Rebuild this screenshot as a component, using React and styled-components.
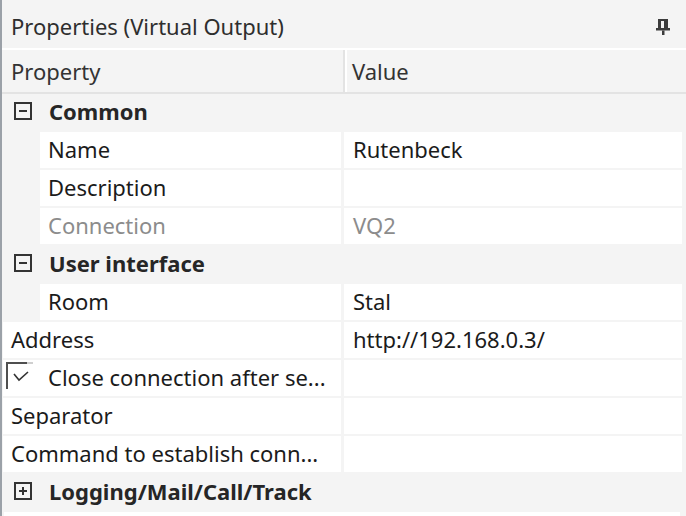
import React from 'react';
import styled, { createGlobalStyle } from 'styled-components';

const GlobalStyle = createGlobalStyle`
  html, body {
    margin: 0;
    padding: 0;
    background: #f4f4f4;
  }
  body {
    font-family: "Noto Sans", "Open Sans", sans-serif;
    font-size: 22px;
    color: #1b1b1b;
  }
`;

const Panel = styled.div`
  width: 684px;
  height: 516px;
  overflow: hidden;
  background: #f4f4f4;
  border-left: 2px solid #9ba1a8;
`;

const TitleBar = styled.div`
  height: 48px;
  display: flex;
  align-items: center;
  justify-content: space-between;
  padding: 6px 15px 0 9px;
  color: #2e2e2e;
  box-sizing: border-box;
`;

const TitleText = styled.span`
  line-height: 1;
  padding-bottom: 2px;
`;

const Header = styled.div`
  display: grid;
  grid-template-columns: 341px 339px;
  height: 46px;
  box-sizing: border-box;
  border-top: 2px solid #ffffff;
  border-bottom: 2px solid #e3e3e3;
  margin-right: -2px;
  color: #333;
`;

const HeaderCell = styled.div`
  display: flex;
  align-items: center;
  padding-left: ${(p) => (p.$value ? 7 : 9)}px;
  padding-bottom: 1px;
  border-left: ${(p) => (p.$value ? '2px solid #e3e3e3' : 'none')};
  box-shadow: ${(p) => (p.$value ? 'inset 2px 0 0 #ffffff' : 'none')};
`;

const Body = styled.div`
  display: flex;
  flex-direction: column;
  gap: 2px;
  padding: 0 2px 0 1px;
`;

const Row = styled.div`
  display: grid;
  grid-template-columns: 338px 338px;
  column-gap: 3px;
  height: 36px;
`;

const Cell = styled.div`
  display: flex;
  align-items: center;
  gap: 15px;
  background: #ffffff;
  white-space: nowrap;
  overflow: hidden;
  box-sizing: border-box;
  padding-bottom: 2px;
  margin-left: ${(p) => (p.$indent ? 37 : 0)}px;
  padding-left: ${(p) => (p.$check ? 3 : p.$value ? 9 : 8)}px;
  color: ${(p) => (p.$disabled ? '#8c8c8c' : '#1b1b1b')};
`;

const GroupRow = styled.div`
  display: flex;
  align-items: center;
  gap: 17px;
  height: 36px;
  box-sizing: border-box;
  padding: 0 0 2px 11px;
  font-weight: 700;
  color: #262626;
`;

const Check = styled.span`
  flex: none;
  width: 25px;
  height: 27px;
  align-self: flex-start;
  margin-top: 2px;
  border-left: 2px solid #4f4f4f;
  background: linear-gradient(to right, #4f4f4f 0 19px, #cfcfcf 19px) top / 100% 2px no-repeat;
  display: flex;
  align-items: center;
  justify-content: center;
`;

const Tail = styled.div`
  height: 10px;
  margin: 0 4px 0 1px;
  background: #ffffff;
`;

const PinIcon = () => (
  <svg width="16" height="18" viewBox="0 0 16 18">
    <path
      fillRule="evenodd"
      fill="#3c3c3c"
      d="M3 1h10v9h-10z M6 3h3v7h-3z"
    />
    <rect x="1" y="10" width="14" height="2.5" fill="#3c3c3c" />
    <rect x="7" y="12.5" width="2.5" height="4.5" fill="#3c3c3c" />
  </svg>
);

const ExpandBox = ({ open }) => (
  <svg width="18" height="18" viewBox="0 0 18 18">
    <rect x="1" y="1" width="16" height="16" fill="none" stroke="#333" strokeWidth="2" />
    <line x1="5" y1="9" x2="13" y2="9" stroke="#333" strokeWidth="2" />
    {!open && <line x1="9" y1="5" x2="9" y2="13" stroke="#333" strokeWidth="2" />}
  </svg>
);

const CheckMark = () => (
  <svg width="18" height="12" viewBox="0 0 18 12">
    <polyline points="2,4 7,10 16,2" fill="none" stroke="#333" strokeWidth="1.6" />
  </svg>
);

const rows = [
  { type: 'group', label: 'Common', open: true },
  { label: 'Name', value: 'Rutenbeck', indent: true },
  { label: 'Description', value: '', indent: true },
  { label: 'Connection', value: 'VQ2', indent: true, disabled: true },
  { type: 'group', label: 'User interface', open: true },
  { label: 'Room', value: 'Stal', indent: true },
  { label: 'Address', value: 'http://192.168.0.3/' },
  { label: 'Close connection after se...', value: '', check: true },
  { label: 'Separator', value: '' },
  { label: 'Command to establish conn...', value: '' },
  { type: 'group', label: 'Logging/Mail/Call/Track', open: false },
];

export default function App() {
  return (
    <>
      <GlobalStyle />
      <Panel>
        <TitleBar>
          <TitleText>Properties (Virtual Output)</TitleText>
          <PinIcon />
        </TitleBar>
        <Header>
          <HeaderCell>Property</HeaderCell>
          <HeaderCell $value>Value</HeaderCell>
        </Header>
        <Body>
          {rows.map((r) =>
            r.type === 'group' ? (
              <GroupRow key={r.label}>
                <ExpandBox open={r.open} />
                {r.label}
              </GroupRow>
            ) : (
              <Row key={r.label}>
                <Cell $indent={r.indent} $disabled={r.disabled} $check={r.check}>
                  {r.check && (
                    <Check>
                      <CheckMark />
                    </Check>
                  )}
                  {r.label}
                </Cell>
                <Cell $value $disabled={r.disabled}>
                  {r.value}
                </Cell>
              </Row>
            )
          )}
          <Tail />
        </Body>
      </Panel>
    </>
  );
}
